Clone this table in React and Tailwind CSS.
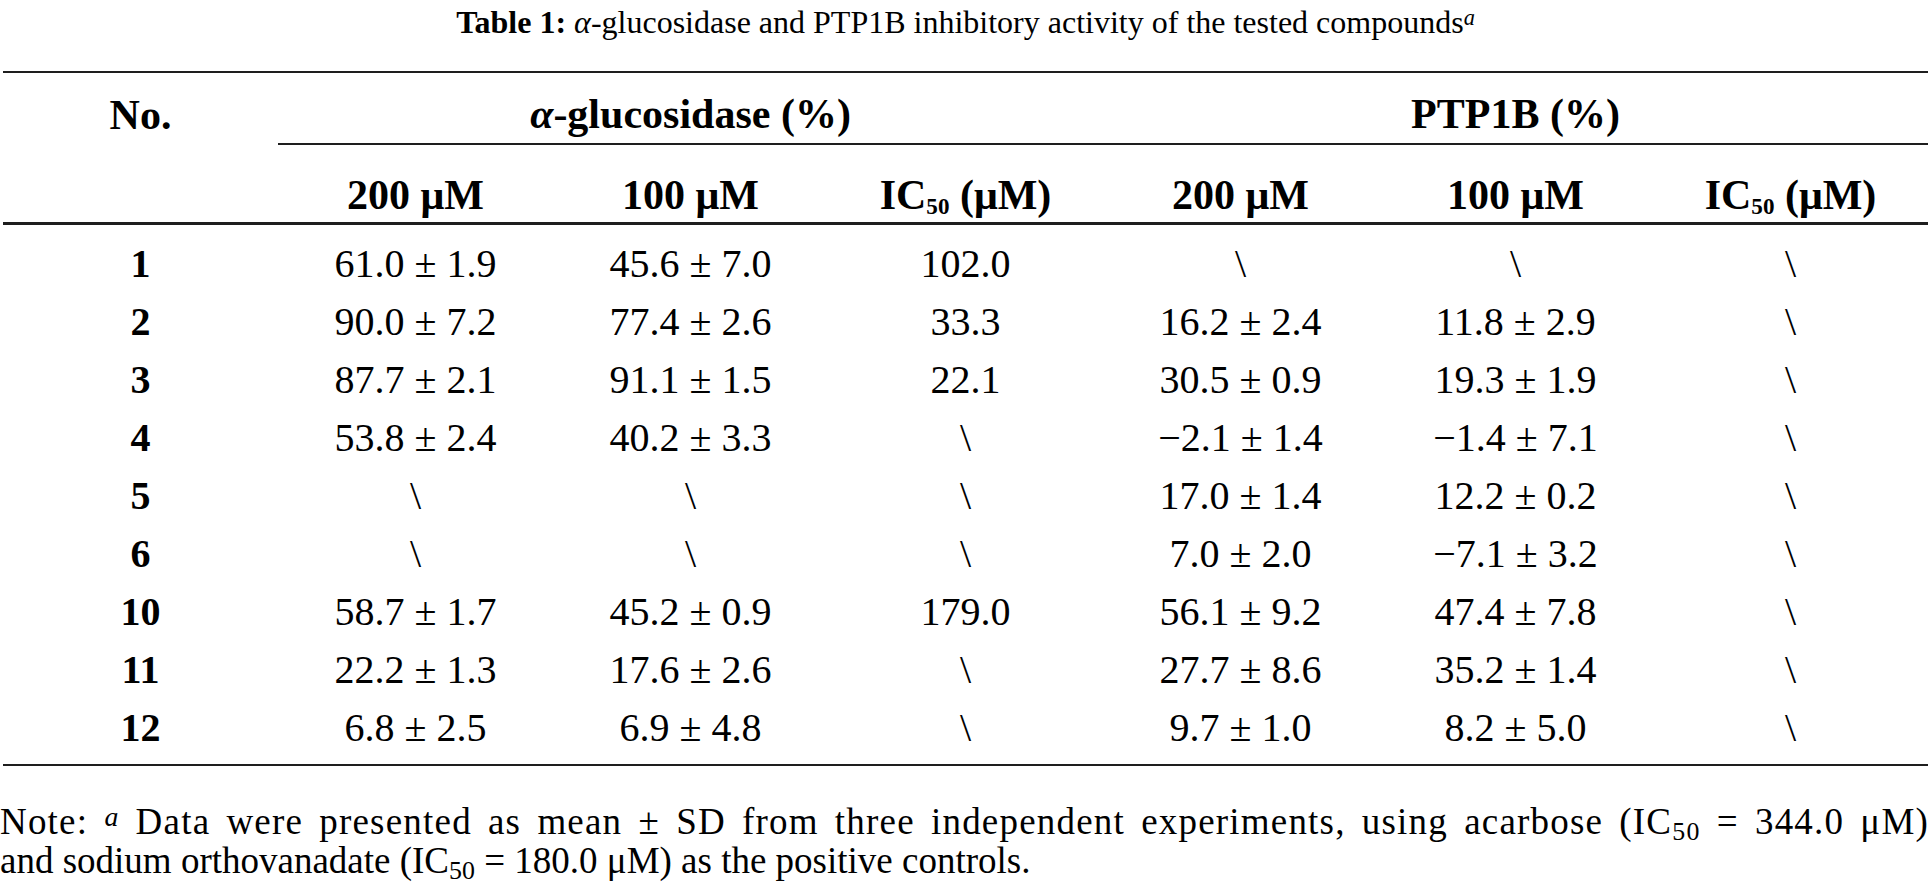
import React from 'react'

// Rows of the inhibitory activity table
const ROWS = [
  { no: '1', a200: '61.0 ± 1.9', a100: '45.6 ± 7.0', aic: '102.0', p200: '\\', p100: '\\', pic: '\\' },
  { no: '2', a200: '90.0 ± 7.2', a100: '77.4 ± 2.6', aic: '33.3', p200: '16.2 ± 2.4', p100: '11.8 ± 2.9', pic: '\\' },
  { no: '3', a200: '87.7 ± 2.1', a100: '91.1 ± 1.5', aic: '22.1', p200: '30.5 ± 0.9', p100: '19.3 ± 1.9', pic: '\\' },
  { no: '4', a200: '53.8 ± 2.4', a100: '40.2 ± 3.3', aic: '\\', p200: '−2.1 ± 1.4', p100: '−1.4 ± 7.1', pic: '\\' },
  { no: '5', a200: '\\', a100: '\\', aic: '\\', p200: '17.0 ± 1.4', p100: '12.2 ± 0.2', pic: '\\' },
  { no: '6', a200: '\\', a100: '\\', aic: '\\', p200: '7.0 ± 2.0', p100: '−7.1 ± 3.2', pic: '\\' },
  { no: '10', a200: '58.7 ± 1.7', a100: '45.2 ± 0.9', aic: '179.0', p200: '56.1 ± 9.2', p100: '47.4 ± 7.8', pic: '\\' },
  { no: '11', a200: '22.2 ± 1.3', a100: '17.6 ± 2.6', aic: '\\', p200: '27.7 ± 8.6', p100: '35.2 ± 1.4', pic: '\\' },
  { no: '12', a200: '6.8 ± 2.5', a100: '6.9 ± 4.8', aic: '\\', p200: '9.7 ± 1.0', p100: '8.2 ± 5.0', pic: '\\' },
]

function Ic50() {
  return (
    <span>
      IC<sub className="text-[0.55em] align-baseline relative top-[0.2em]">50</sub> (μM)
    </span>
  )
}

export default function App() {
  return (
    <div className="w-[1931px] h-[885px] bg-white text-black font-['Liberation_Serif','Times_New_Roman',serif] overflow-hidden">
      {/* Caption */}
      <p className="text-center text-[32px] leading-[44px] mb-[27px]">
        <span className="font-bold">Table 1:</span> <i>α</i>-glucosidase and PTP1B inhibitory activity of the tested compounds<sup className="italic text-[0.7em] relative -top-[0.35em]">a</sup>
      </p>

      <div className="mx-[3px] border-t-2 border-[#1e1e1e]">
        {/* Header row 1 */}
        <div className="grid grid-cols-7 font-bold text-[42px]">
          <div className="h-[72px] flex items-center justify-center pt-[12px]">No.</div>
          <div className="col-span-3 h-[72px] flex items-center justify-center pt-[12px] border-b-2 border-[#1e1e1e]">
            <span><i>α</i>-glucosidase (%)</span>
          </div>
          <div className="col-span-3 h-[72px] flex items-center justify-center pt-[12px] border-b-2 border-[#1e1e1e]">
            PTP1B (%)
          </div>
        </div>

        {/* Header row 2 */}
        <div className="grid grid-cols-7 font-bold text-[42px] border-b-[3px] border-[#1e1e1e]">
          <div className="h-[77px]" />
          <div className="h-[77px] flex items-center justify-center pt-[24px]">200 μM</div>
          <div className="h-[77px] flex items-center justify-center pt-[24px]">100 μM</div>
          <div className="h-[77px] flex items-center justify-center pt-[24px]"><Ic50 /></div>
          <div className="h-[77px] flex items-center justify-center pt-[24px]">200 μM</div>
          <div className="h-[77px] flex items-center justify-center pt-[24px]">100 μM</div>
          <div className="h-[77px] flex items-center justify-center pt-[24px]"><Ic50 /></div>
        </div>

        {/* Body */}
        <div className="pt-[9px] pb-[8px] border-b-2 border-[#1e1e1e] text-[40px]">
          {ROWS.map(r => (
            <div key={r.no} className="grid grid-cols-7 h-[58px] items-center text-center">
              <div className="font-bold">{r.no}</div>
              <div>{r.a200}</div>
              <div>{r.a100}</div>
              <div>{r.aic}</div>
              <div>{r.p200}</div>
              <div>{r.p100}</div>
              <div>{r.pic}</div>
            </div>
          ))}
        </div>
      </div>

      {/* Footnote: first line justified across the page */}
      <div className="mt-[36px] mr-[2px] text-[37px] leading-[39px]">
        <p className="whitespace-nowrap tracking-[1.2px] text-justify [text-align-last:justify]">
          Note: <sup className="italic text-[0.75em] relative -top-[0.3em]">a</sup> Data were presented as mean ± SD from three independent experiments, using acarbose (IC<sub className="text-[0.7em] align-baseline relative top-[0.25em]">50</sub> = 344.0 μM)
        </p>
        <p className="whitespace-nowrap">
          and sodium orthovanadate (IC<sub className="text-[0.7em] align-baseline relative top-[0.25em]">50</sub> = 180.0 μM) as the positive controls.
        </p>
      </div>
    </div>
  )
}
